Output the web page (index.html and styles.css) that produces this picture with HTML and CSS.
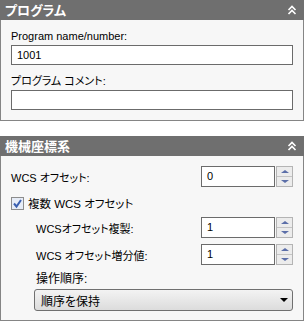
FILE: index.html
```html
<!DOCTYPE html>
<html>
<head>
	<title>プログラム設定</title>
	<link rel="stylesheet" href="styles.css">
</head>
<body>
	<div class="panel">
		<div class="panel-head">
			<span class="title">プログラム</span>
			<svg class="collapse" width="10" height="10" viewBox="0 0 10 10"><path d="M1.5 5 L5 1.5 L8.5 5 M1.5 9 L5 5.5 L8.5 9" fill="none" stroke="#fff" stroke-width="1.6"/></svg>
		</div>
		<div class="panel-body prog">
			<div class="label">Program name/number:</div>
			<div class="textbox">1001</div>
			<div class="label second">プログラム コメント:</div>
			<div class="textbox"></div>
		</div>
	</div>

	<div class="panel wcs">
		<div class="panel-head">
			<span class="title">機械座標系</span>
			<svg class="collapse" width="10" height="10" viewBox="0 0 10 10"><path d="M1.5 5 L5 1.5 L8.5 5 M1.5 9 L5 5.5 L8.5 9" fill="none" stroke="#fff" stroke-width="1.6"/></svg>
		</div>
		<div class="panel-body">
			<div class="row">
				<span class="row-label">WCS オフセット:</span>
				<div class="spinner">
					<div class="spin-value">0</div>
					<div class="spin-btns">
						<div class="spin-up"><span class="tri-up"></span></div>
						<div class="spin-down"><span class="tri-down"></span></div>
					</div>
				</div>
			</div>
			<label class="check-row">
				<span class="checkbox"><svg width="11" height="11" viewBox="0 0 11 11"><path d="M2 5.5 L4.5 8.5 L9 2" fill="none" stroke="#3a5fb0" stroke-width="2"/></svg></span>
				<span>複数 WCS オフセット</span>
			</label>
			<div class="sub">
				<div class="row">
					<span class="row-label">WCSオフセット複製:</span>
					<div class="spinner">
						<div class="spin-value">1</div>
						<div class="spin-btns">
							<div class="spin-up"><span class="tri-up"></span></div>
							<div class="spin-down"><span class="tri-down"></span></div>
						</div>
					</div>
				</div>
				<div class="row">
					<span class="row-label">WCS オフセット増分値:</span>
					<div class="spinner">
						<div class="spin-value">1</div>
						<div class="spin-btns">
							<div class="spin-up"><span class="tri-up"></span></div>
							<div class="spin-down"><span class="tri-down"></span></div>
						</div>
					</div>
				</div>
				<div class="label order">操作順序:</div>
				<div class="dropdown">
					<span>順序を保持</span>
					<span class="arrow"></span>
				</div>
			</div>
		</div>
	</div>
</body>
</html>
```

FILE: styles.css
```css
body{
	margin: 0;
	background: #fff;
	font-family: "Liberation Sans", "Noto Sans CJK JP", sans-serif;
	font-size: 11px;
	font-feature-settings: "palt";
	color: #000;
}
.panel{
	width: 304px;
}
.wcs{
	margin-top: 15px;
}
.panel-head{
	height: 20px;
	background: #6f6f6f;
	display: flex;
	align-items: center;
	justify-content: space-between;
	padding: 0 7px 0 5px;
}
.title{
	color: #fff;
	font-family: "Noto Sans CJK JP", sans-serif;
	font-weight: bold;
	font-size: 13px;
	line-height: 20px;
}
.panel-body{
	background: #f7f7f7;
	border: 1px solid #858585;
	border-top: none;
	padding: 8px 10px 10px 10px;
}
.label{
	line-height: 16px;
	height: 16px;
	margin-bottom: 1px;
}
.label.second{
	margin-top: 8px;
}
.textbox{
	height: 18px;
	border: 1px solid #6b6b6b;
	background: #fff;
	padding-left: 5px;
	line-height: 18px;
}
.wcs .panel-body{
	padding-top: 10px;
	padding-bottom: 9px;
}
.row{
	display: flex;
	align-items: center;
	justify-content: space-between;
	height: 21px;
}
.spinner{
	display: flex;
	width: 92px;
	height: 21px;
}
.spin-value{
	width: 69px;
	border: 1px solid #6b6b6b;
	background: #fff;
	padding-left: 5px;
	line-height: 19px;
}
.spin-btns{
	width: 15px;
	margin-left: 1px;
	border: 1px solid #b4b4b4;
	background: #ececec;
	display: flex;
	flex-direction: column;
}
.spin-up,
.spin-down{
	flex: 1;
	display: flex;
	align-items: center;
	justify-content: center;
}
.spin-up{
	border-bottom: 1px solid #c4c4c4;
}
.tri-up{
	border-left: 4px solid transparent;
	border-right: 4px solid transparent;
	border-bottom: 3px solid #5b6ea8;
}
.tri-down{
	border-left: 4px solid transparent;
	border-right: 4px solid transparent;
	border-top: 3px solid #5b6ea8;
}
.check-row{
	display: flex;
	align-items: center;
	gap: 4px;
	height: 16px;
	margin-top: 8px;
	font-size: 11.5px;
}
.checkbox{
	width: 11px;
	height: 11px;
	border: 1px solid #8c8c8c;
	background: #e6ecf7;
	display: flex;
}
.sub{
	padding-left: 25px;
	margin-top: 6px;
}
.sub .row{
	margin-bottom: 6px;
}
.label.order{
	margin-bottom: 2px;
	font-size: 12px;
}
.dropdown{
	margin-left: -2px;
	height: 20px;
	border: 1px solid #707070;
	border-radius: 3px;
	background: linear-gradient(#f3f3f3, #dcdcdc);
	display: flex;
	align-items: center;
	justify-content: space-between;
	padding: 0 4px 0 6px;
	font-size: 12px;
}
.arrow{
	border-left: 4px solid transparent;
	border-right: 4px solid transparent;
	border-top: 4px solid #000;
}
```
